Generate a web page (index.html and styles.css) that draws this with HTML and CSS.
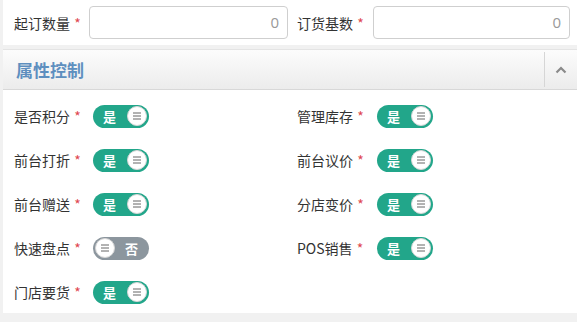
FILE: index.html
```html
<!DOCTYPE html>
<html>
<head>
<meta charset="utf-8">
<link rel="stylesheet" href="styles.css">
</head>
<body>
<div class="page">
  <div class="top">
    <div class="field f-left">
      <label class="lbl">起订数量 <span class="req">*</span></label>
      <div class="input">0</div>
    </div>
    <div class="field f-right">
      <label class="lbl">订货基数 <span class="req">*</span></label>
      <div class="input">0</div>
    </div>
  </div>

  <div class="panel-head">
    <div class="title">属性控制</div>
    <div class="toggle">
      <svg width="12" height="8" viewBox="0 0 12 8"><path d="M1.5 6.5 L6 2 L10.5 6.5" fill="none" stroke="#8a8a8a" stroke-width="2.2"/></svg>
    </div>
  </div>

  <div class="panel-body">
    <div class="row">
      <div class="sw-field f-left"><span class="lbl2">是否积分 <span class="req">*</span></span><span class="sw on"><span class="txt">是</span><span class="knob"><svg width="10" height="8" viewBox="0 0 10 8"><path d="M1 1h8M1 4h8M1 7h8" stroke="#666" stroke-width="1"/></svg></span></span></div>
      <div class="sw-field f-right"><span class="lbl2">管理库存 <span class="req">*</span></span><span class="sw on"><span class="txt">是</span><span class="knob"><svg width="10" height="8" viewBox="0 0 10 8"><path d="M1 1h8M1 4h8M1 7h8" stroke="#666" stroke-width="1"/></svg></span></span></div>
    </div>
    <div class="row">
      <div class="sw-field f-left"><span class="lbl2">前台打折 <span class="req">*</span></span><span class="sw on"><span class="txt">是</span><span class="knob"><svg width="10" height="8" viewBox="0 0 10 8"><path d="M1 1h8M1 4h8M1 7h8" stroke="#666" stroke-width="1"/></svg></span></span></div>
      <div class="sw-field f-right"><span class="lbl2">前台议价 <span class="req">*</span></span><span class="sw on"><span class="txt">是</span><span class="knob"><svg width="10" height="8" viewBox="0 0 10 8"><path d="M1 1h8M1 4h8M1 7h8" stroke="#666" stroke-width="1"/></svg></span></span></div>
    </div>
    <div class="row">
      <div class="sw-field f-left"><span class="lbl2">前台赠送 <span class="req">*</span></span><span class="sw on"><span class="txt">是</span><span class="knob"><svg width="10" height="8" viewBox="0 0 10 8"><path d="M1 1h8M1 4h8M1 7h8" stroke="#666" stroke-width="1"/></svg></span></span></div>
      <div class="sw-field f-right"><span class="lbl2">分店变价 <span class="req">*</span></span><span class="sw on"><span class="txt">是</span><span class="knob"><svg width="10" height="8" viewBox="0 0 10 8"><path d="M1 1h8M1 4h8M1 7h8" stroke="#666" stroke-width="1"/></svg></span></span></div>
    </div>
    <div class="row">
      <div class="sw-field f-left"><span class="lbl2">快速盘点 <span class="req">*</span></span><span class="sw off"><span class="knob"><svg width="10" height="8" viewBox="0 0 10 8"><path d="M1 1h8M1 4h8M1 7h8" stroke="#666" stroke-width="1"/></svg></span><span class="txt">否</span></span></div>
      <div class="sw-field f-right"><span class="lbl2">POS销售 <span class="req">*</span></span><span class="sw on"><span class="txt">是</span><span class="knob"><svg width="10" height="8" viewBox="0 0 10 8"><path d="M1 1h8M1 4h8M1 7h8" stroke="#666" stroke-width="1"/></svg></span></span></div>
    </div>
    <div class="row">
      <div class="sw-field f-left"><span class="lbl2">门店要货 <span class="req">*</span></span><span class="sw on"><span class="txt">是</span><span class="knob"><svg width="10" height="8" viewBox="0 0 10 8"><path d="M1 1h8M1 4h8M1 7h8" stroke="#666" stroke-width="1"/></svg></span></span></div>
    </div>
  </div>
</div>
</body>
</html>
```

FILE: styles.css
```css
* { box-sizing: border-box; }
html, body { margin: 0; padding: 0; }
body {
  width: 577px; height: 322px; overflow: hidden;
  background: #f1f1f1;
  font-family: "Noto Sans CJK SC", "Noto Sans", sans-serif;
  font-size: 14px; color: #333;
}
.page { padding-left: 3px; }
.top {
  background: #fff; height: 45px;
  display: flex; align-items: center;
  padding-left: 11px;
}
.field { display: flex; align-items: center; }
.f-left { width: 283px; }
.f-right { width: 280px; }
.top .f-left .lbl { width: 75px; }
.top .f-right .lbl { width: 76px; }
.lbl { white-space: nowrap; }
.req { color: #e0474f; margin-left: 1px; }
.input {
  height: 33px; flex: 1;
  border: 1px solid #cfcfcf; border-radius: 4px;
  text-align: right; padding-right: 8px;
  line-height: 31px; color: #999; font-size: 15px;
  font-family: "Open Sans", "Noto Sans", sans-serif;
}
.top .f-left .input { flex: 0 0 199px; }
.top .f-right .input { flex: 0 0 197px; }
.panel-head {
  margin-top: 4px; height: 41px;
  background: linear-gradient(#fcfcfc, #ececec);
  border-top: 1px solid #e4e4e4;
  border-bottom: 1px solid #d8d8d8;
  display: flex; align-items: center; justify-content: space-between;
  padding-left: 13px;
}
.title { font-size: 17px; font-weight: bold; color: #5e8fbf; }
.toggle {
  width: 33px; height: 35px;
  border-left: 1px solid #d6d6d6;
  display: flex; align-items: center; justify-content: center;
}
.panel-body {
  background: #fff; height: 223px;
  padding: 4px 0 0 11px;
}
.row { display: flex; align-items: center; height: 44px; }
.sw-field { display: flex; align-items: center; }
.f-left .lbl2 { width: 79px; }
.f-right .lbl2 { width: 80px; }
.lbl2 { white-space: nowrap; }
.sw {
  width: 56px; height: 23px; border-radius: 12px;
  display: flex; align-items: center; justify-content: space-between;
  padding: 0 2px; color: #fff; font-weight: bold; font-size: 13px;
}
.sw.on { background: #22a68a; padding-left: 10px; }
.sw.off { background: #8c969e; padding-right: 11px; }
.knob {
  width: 20px; height: 20px; border-radius: 50%;
  background: #fff; border: 1px solid #d6d6d6;
  display: flex; align-items: center; justify-content: center;
}
```
